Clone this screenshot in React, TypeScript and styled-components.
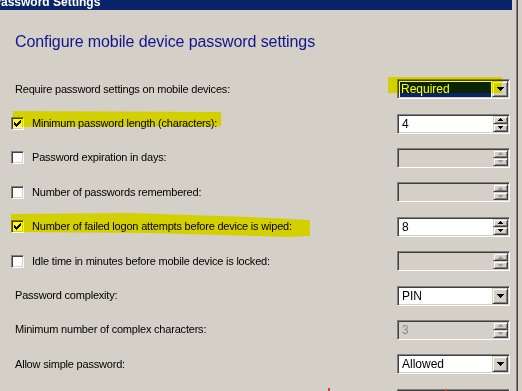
import styled, { createGlobalStyle } from 'styled-components';

const GlobalStyle = createGlobalStyle`
	html, body {
		margin: 0;
		padding: 0;
		background: #d4d0c8;
		overflow: hidden;
	}
	body {
		font-family: "Liberation Sans", Arial, sans-serif;
		font-size: 11px;
		color: #000;
	}
`;

type Control =
	| { kind: 'combo'; value: string; focused?: boolean }
	| { kind: 'spin'; value?: string; disabled?: boolean };

type Setting = {
	label: string;
	check?: boolean;
	checked?: boolean;
	control: Control;
};

const settings: Setting[] = [
	{ label: 'Require password settings on mobile devices:', control: { kind: 'combo', value: 'Required', focused: true } },
	{ label: 'Minimum password length (characters):', check: true, checked: true, control: { kind: 'spin', value: '4' } },
	{ label: 'Password expiration in days:', check: true, control: { kind: 'spin', disabled: true } },
	{ label: 'Number of passwords remembered:', check: true, control: { kind: 'spin', disabled: true } },
	{ label: 'Number of failed logon attempts before device is wiped:', check: true, checked: true, control: { kind: 'spin', value: '8' } },
	{ label: 'Idle time in minutes before mobile device is locked:', check: true, control: { kind: 'spin', disabled: true } },
	{ label: 'Password complexity:', control: { kind: 'combo', value: 'PIN' } },
	{ label: 'Minimum number of complex characters:', control: { kind: 'spin', value: '3', disabled: true } },
	{ label: 'Allow simple password:', control: { kind: 'combo', value: 'Allowed' } },
	{ label: 'Allow password recovery:', control: { kind: 'combo', value: 'Allowed' } },
];

const Arrow = ({ dir, disabled }: { dir: 'up' | 'down'; disabled?: boolean }) => {
	const pts = dir === 'up' ? '2.5,0 5,3 0,3' : '0,0 5,0 2.5,3';
	return (
		<svg width="5" height="3" viewBox="0 0 5 3" shapeRendering="crispEdges">
			<polygon points={pts} fill={disabled ? '#9a9a9a' : '#000'} />
		</svg>
	);
};

const DropArrow = () => (
	<svg width="7" height="4" viewBox="0 0 7 4" shapeRendering="crispEdges">
		<polygon points="0,0 7,0 3.5,4" fill="#000" />
	</svg>
);

const CheckMark = () => (
	<svg width="7" height="7" viewBox="0 0 7 7" shapeRendering="crispEdges">
		<path d="M6 0h1v3h-1v1h-1v1h-1v1h-1v1h-1v-1h-1v-1h-1v-3h1v1h1v1h1v-1h1v-1h1v-1h1z" fill="#000" />
	</svg>
);

const SpinBox = ({ value, disabled }: { value?: string; disabled?: boolean }) => (
	<Field $disabled={disabled}>
		<FieldText $disabled={disabled}>{value}</FieldText>
		<SpinButtons>
			<RaisedButton>
				<Arrow dir="up" disabled={disabled} />
			</RaisedButton>
			<RaisedButton>
				<Arrow dir="down" disabled={disabled} />
			</RaisedButton>
		</SpinButtons>
	</Field>
);

const ComboBox = ({ value, focused }: { value: string; focused?: boolean }) => (
	<Field>
		{focused ? <Selection>{value}</Selection> : <FieldText>{value}</FieldText>}
		<DropButton>
			<DropArrow />
		</DropButton>
	</Field>
);

const App = () => {
	return (
		<>
			<GlobalStyle />
			<Frame>
				<TitleBar>
					<TitleText>Password Settings</TitleText>
				</TitleBar>
				<Content>
					<Heading>Configure mobile device password settings</Heading>
					<Rows>
						{settings.map((s) => (
							<Row key={s.label}>
								{s.check && (
									<CheckBox>{s.checked && <CheckMark />}</CheckBox>
								)}
								<Label $withCheck={!!s.check}>{s.label}</Label>
								{s.control.kind === 'combo' ? (
									<ComboBox value={s.control.value} focused={s.control.focused} />
								) : (
									<SpinBox value={s.control.value} disabled={s.control.disabled} />
								)}
							</Row>
						))}
					</Rows>
				</Content>

				{/* highlighter marks drawn over the dialog */}
				<Marker $x={388} $y={77} $w={114} $h={16} />
				<Marker $x={13} $y={111} $w={208} $h={16} $shape="polygon(0 0, 100% 6%, 100% 96%, 0 100%)" />
				<Marker
					$x={11}
					$y={213}
					$w={299}
					$h={24}
					$shape="polygon(0 4%, 40% 0, 80% 17%, 100% 29%, 100% 96%, 93% 100%, 46% 83%, 0 79%)"
				/>
				<Pen $x={328} $y={388} $w={2} $h={3} />
				<Pen $x={445} $y={389} $w={2} $h={2} />
			</Frame>
		</>
	);
};

const Frame = styled.div`
	position: relative;
	width: 512px;
	height: 391px;
	padding-right: 5px;
	border-right: 1px solid #404040;
	box-shadow: inset -1px 0 0 #808080;
	background: #d4d0c8;
	overflow: hidden;
`;

const TitleBar = styled.div`
	height: 10px;
	background: #0a246a;
	overflow: hidden;
`;

const TitleText = styled.div`
	margin-left: -7px;
	color: #fff;
	font-weight: bold;
	font-size: 12px;
	line-height: 4px;
	white-space: nowrap;
`;

const Content = styled.div`
	display: flex;
	flex-direction: column;
	padding-top: 22px;
`;

const Heading = styled.div`
	padding-left: 15px;
	font-size: 16px;
	line-height: 19px;
	letter-spacing: -0.1px;
	color: #14148c;
	white-space: nowrap;
`;

const Rows = styled.div`
	display: flex;
	flex-direction: column;
	margin-top: 21px;
	padding-right: 2px;
`;

const Row = styled.div`
	display: flex;
	align-items: center;
	height: 34.4px;
	flex-shrink: 0;
`;

const CheckBox = styled.div`
	box-sizing: border-box;
	width: 13px;
	height: 13px;
	margin-left: 11px;
	display: flex;
	align-items: center;
	justify-content: center;
	background: #fff;
	border: 1px solid;
	border-color: #808080 #fff #fff #808080;
	box-shadow: inset 1px 1px 0 #404040, inset -1px -1px 0 #d4d0c8;
`;

const Label = styled.div<{ $withCheck: boolean }>`
	flex: 1;
	padding-left: ${(p) => (p.$withCheck ? '8px' : '15px')};
	white-space: nowrap;
	line-height: 13px;
	letter-spacing: -0.2px;
`;

const Field = styled.div<{ $disabled?: boolean }>`
	box-sizing: border-box;
	width: 113px;
	height: 20px;
	display: flex;
	padding: 1px;
	background: ${(p) => (p.$disabled ? '#d4d0c8' : '#fff')};
	border: 1px solid;
	border-color: #808080 #fff #fff #808080;
	box-shadow: inset 1px 1px 0 #404040, inset -1px -1px 0 #d4d0c8;
`;

const FieldText = styled.div<{ $disabled?: boolean }>`
	flex: 1;
	padding-left: 3px;
	line-height: 16px;
	font-size: 12px;
	color: ${(p) => (p.$disabled ? '#8a8a8a' : '#000')};
	white-space: nowrap;
`;

const Selection = styled.div`
	flex: 1;
	margin: 1px 1px 0 1px;
	padding-left: 1px;
	line-height: 15px;
	font-size: 12px;
	background: #0a246a;
	color: #fff;
	white-space: nowrap;
`;

const RaisedButton = styled.div`
	box-sizing: border-box;
	flex: 1;
	display: flex;
	align-items: center;
	justify-content: center;
	background: #d4d0c8;
	border: 1px solid;
	border-color: #d4d0c8 #404040 #404040 #d4d0c8;
	box-shadow: inset 1px 1px 0 #fff, inset -1px -1px 0 #808080;
`;

const SpinButtons = styled.div`
	display: flex;
	flex-direction: column;
	width: 15px;
`;

const DropButton = styled(RaisedButton)`
	flex: none;
	width: 16px;
	height: 16px;
`;

const Marker = styled.span<{ $x: number; $y: number; $w: number; $h: number; $shape?: string }>`
	position: absolute;
	left: ${(p) => p.$x}px;
	top: ${(p) => p.$y}px;
	width: ${(p) => p.$w}px;
	height: ${(p) => p.$h}px;
	background: #ffff00;
	mix-blend-mode: multiply;
	pointer-events: none;
	clip-path: ${(p) => p.$shape ?? 'none'};
`;

const Pen = styled.span<{ $x: number; $y: number; $w: number; $h: number }>`
	position: absolute;
	left: ${(p) => p.$x}px;
	top: ${(p) => p.$y}px;
	width: ${(p) => p.$w}px;
	height: ${(p) => p.$h}px;
	background: #e0401a;
`;

export default App;
